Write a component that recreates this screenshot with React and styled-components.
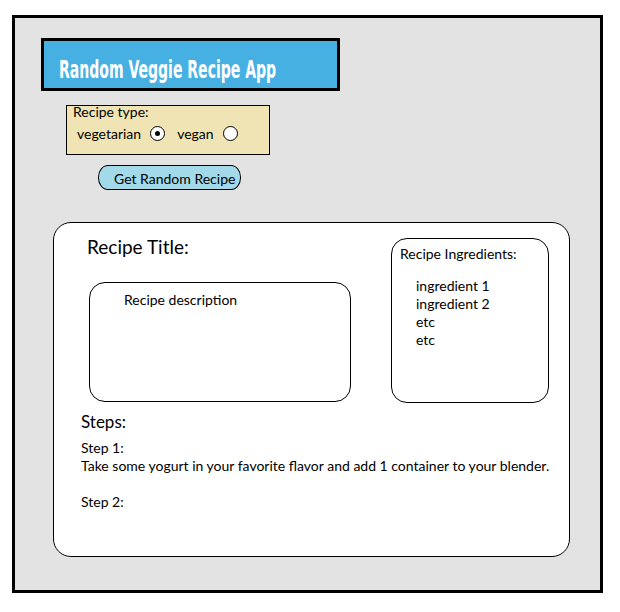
import React, { useState } from "react";
import styled, { createGlobalStyle } from "styled-components";

const GlobalStyle = createGlobalStyle`
  html, body {
    margin: 0;
    padding: 0;
    background: #ffffff;
  }
  body {
    font-family: "Lato", "Liberation Sans", sans-serif;
    color: #000000;
  }
`;

const Frame = styled.div`
  box-sizing: border-box;
  margin: 15px 0 0 12px;
  width: 591px;
  height: 578px;
  border: 3px solid #000000;
  background: #e3e3e3;
  padding: 20px 0 0 26px;
`;

const TitleBar = styled.div`
  box-sizing: border-box;
  width: 299px;
  height: 53px;
  border: 3px solid #000000;
  background: #47b0e3;
  display: flex;
  align-items: center;
  padding: 10px 0 0 15px;
  overflow: hidden;
`;

const AppTitle = styled.h1`
  margin: 0;
  font-family: "DejaVu Sans Condensed", "DejaVu Sans", sans-serif;
  font-weight: bold;
  font-size: 24px;
  color: #ffffff;
  white-space: nowrap;
  transform: scaleX(0.65);
  transform-origin: left center;
`;

const TypeBox = styled.fieldset`
  box-sizing: border-box;
  margin: 14px 0 0 25px;
  width: 204px;
  height: 50px;
  border: 1px solid #000000;
  background: #f0e4b4;
  padding: 0 0 0 6px;
`;

const TypeLabel = styled.div`
  font-size: 14px;
  line-height: 14px;
  margin-top: -1px;
`;

const RadioRow = styled.div`
  display: flex;
  align-items: center;
  margin: 6px 0 0 4px;
  font-size: 14px;
`;

const RadioOption = styled.label`
  display: flex;
  align-items: center;
  gap: 9px;
  margin-right: ${({ gapRight }) => gapRight || 0}px;
  cursor: pointer;
`;

const RadioCircle = styled.span`
  box-sizing: border-box;
  width: 15px;
  height: 15px;
  border-radius: 50%;
  border: 1px solid #000000;
  background: #ffffff;
  display: flex;
  align-items: center;
  justify-content: center;

  &::after {
    content: "";
    display: ${({ checked }) => (checked ? "block" : "none")};
    width: 5px;
    height: 5px;
    border-radius: 50%;
    background: #000000;
  }
`;

const RandomButton = styled.button`
  box-sizing: border-box;
  margin: 10px 0 0 57px;
  width: 143px;
  height: 25px;
  border: 1px solid #000000;
  border-radius: 10px / 12px;
  background: #a2daea;
  font-family: "Lato", "Liberation Sans", sans-serif;
  font-size: 14px;
  color: #000000;
  padding: 1px 0 0 15px;
  text-align: left;
  cursor: pointer;
`;

const Card = styled.section`
  box-sizing: border-box;
  margin: 32px 0 0 12px;
  width: 517px;
  height: 335px;
  border: 1px solid #000000;
  border-radius: 18px;
  background: #ffffff;
  padding: 15px 0 0 27px;
`;

const TopRow = styled.div`
  display: flex;
  justify-content: space-between;
  margin-right: 20px;
`;

const LeftCol = styled.div`
  display: flex;
  flex-direction: column;
`;

const RecipeTitle = styled.h2`
  margin: -2px 0 0 6px;
  font-weight: normal;
  font-size: 19px;
  line-height: 22px;
`;

const RoundedBox = styled.div`
  box-sizing: border-box;
  width: ${({ w }) => w}px;
  height: ${({ h }) => h}px;
  border: 1px solid #000000;
  border-radius: 16px;
  font-size: 14px;
`;

const DescBox = styled(RoundedBox)`
  margin: 24px 0 0 8px;
  padding: 8px 0 0 34px;
`;

const IngredientsBox = styled(RoundedBox)`
  padding: 6px 0 0 8px;
`;

const IngredientsTitle = styled.div`
  line-height: 18px;
`;

const IngredientList = styled.ul`
  list-style: none;
  margin: 14px 0 0 16px;
  padding: 0;
  line-height: 18px;
`;

const StepsTitle = styled.h3`
  margin: 8px 0 0;
  font-weight: normal;
  font-size: 17px;
  line-height: 22px;
`;

const StepBlock = styled.div`
  margin-top: ${({ top }) => top}px;
  font-size: 14px;
  line-height: 18px;
  white-space: nowrap;
`;

const ingredients = ["ingredient 1", "ingredient 2", "etc", "etc"];

const App = () => {
  const [type, setType] = useState("vegetarian");

  return (
    <>
      <GlobalStyle />
      <Frame>
        <TitleBar>
          <AppTitle>Random Veggie Recipe App</AppTitle>
        </TitleBar>

        <TypeBox>
          <TypeLabel>Recipe type:</TypeLabel>
          <RadioRow>
            <RadioOption gapRight={12} onClick={() => setType("vegetarian")}>
              vegetarian
              <RadioCircle checked={type === "vegetarian"} />
            </RadioOption>
            <RadioOption onClick={() => setType("vegan")}>
              vegan
              <RadioCircle checked={type === "vegan"} />
            </RadioOption>
          </RadioRow>
        </TypeBox>

        <RandomButton>Get Random Recipe</RandomButton>

        <Card>
          <TopRow>
            <LeftCol>
              <RecipeTitle>Recipe Title:</RecipeTitle>
              <DescBox w={262} h={120}>
                Recipe description
              </DescBox>
            </LeftCol>
            <IngredientsBox w={158} h={165}>
              <IngredientsTitle>Recipe Ingredients:</IngredientsTitle>
              <IngredientList>
                {ingredients.map((item, i) => (
                  <li key={i}>{item}</li>
                ))}
              </IngredientList>
            </IngredientsBox>
          </TopRow>

          <StepsTitle>Steps:</StepsTitle>
          <StepBlock top={6}>
            Step 1:
            <br />
            Take some yogurt in your favorite flavor and add 1 container to
            your blender.
          </StepBlock>
          <StepBlock top={18}>Step 2:</StepBlock>
        </Card>
      </Frame>
    </>
  );
};

export default App;
